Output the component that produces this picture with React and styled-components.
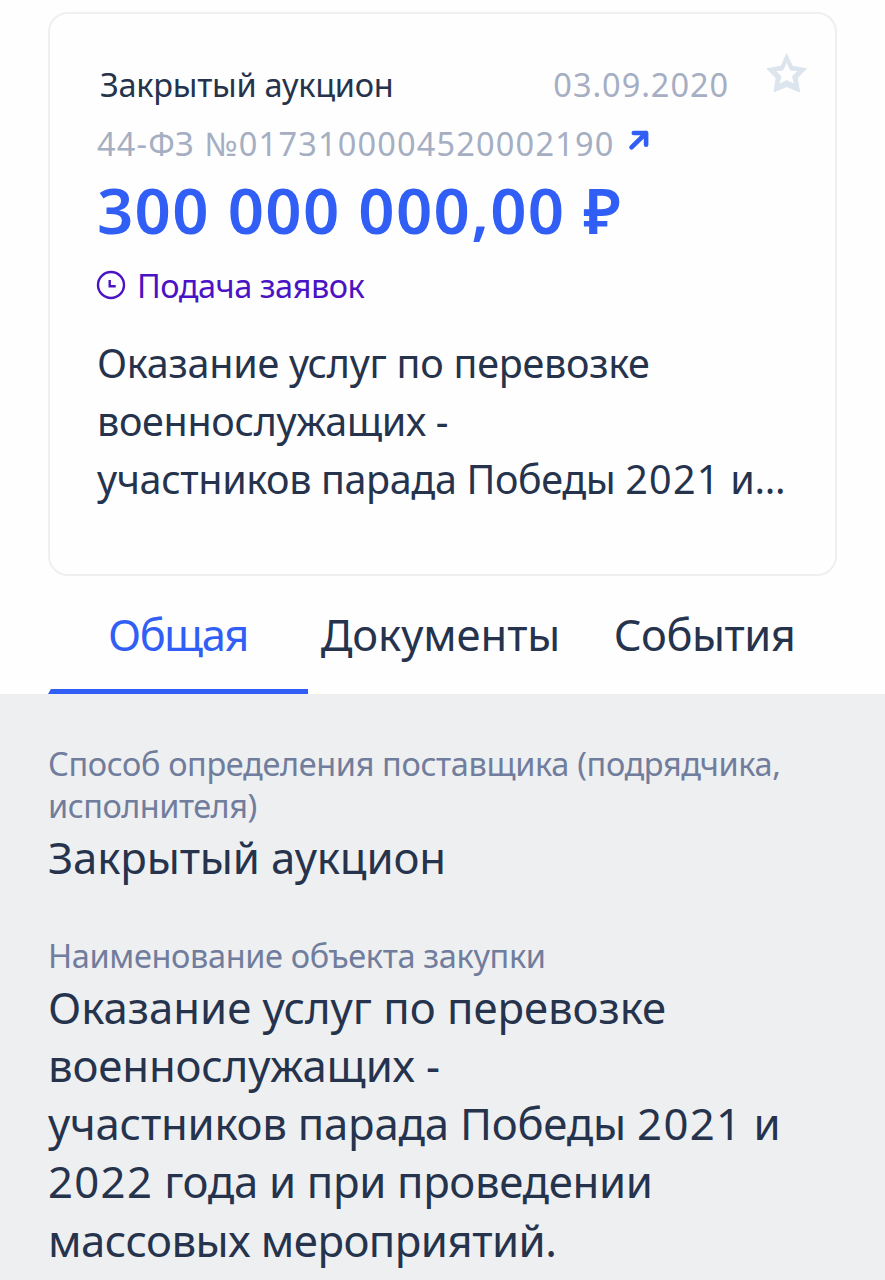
import React from 'react';
import styled, { createGlobalStyle } from 'styled-components';

const Global = createGlobalStyle`
  * { box-sizing: border-box; }
  body { margin: 0; background: #fefefe; font-family: "Noto Sans", sans-serif; color: #26334d; }
`;
const Page = styled.main`width: 885px; height: 1280px; overflow: hidden; display: flex; flex-direction: column;`;
const Card = styled.article`
  margin: 12px 48px 0; width: 789px; height: 564px; flex: none;
  border: 2px solid #eeeff0; border-radius: 20px; padding: 49px 28px 0 48px;
`;
const Line = styled.span`
  display: block; white-space: nowrap; letter-spacing: ${p => p.$track || 0}px;
`;
const Year = styled.span`letter-spacing: 0.03em;`;
const Header = styled.header`
  display: flex; align-items: flex-start; height: 59px; font-size: 32.5px; line-height: 44px;
`;
const Kind = styled.div`margin-left: 2px; flex: 1;`;
const DateText = styled.time`color: #a5aec2;`;
const StarButton = styled.button`
  border: 0; background: none; padding: 0; margin: -12px -1px 0 36px; width: 43px; height: 43px;
  svg { display: block; }
`;
const NumberRow = styled.div`
  display: flex; color: #a5aec2; font-size: 32.5px; line-height: 44px; height: 48px; margin-left: -1px;
  svg { margin: 7px 0 0 14px; }
`;
const Price = styled.div`color: #315ef5; font-size: 63.5px; font-weight: 600; line-height: 80px; height: 94px; margin-left: -1px;`;
const Status = styled.div`
  display: flex; color: #4a14c4; font-size: 32.5px; line-height: 44px; height: 70px;
  svg { margin: 6px 11px 0 -2px; }
`;
const Summary = styled.div`font-size: 39.5px; line-height: 58px; margin-left: -1px;`;
const Tabs = styled.nav`display: flex; height: 118px; margin: 0 48px; flex: none;`;
const Tab = styled.div`
  width: ${p => p.$width}px; display: flex; flex-direction: column; align-items: center; justify-content: space-between;
  padding-top: 29px; font-size: 43.5px; line-height: 58px; color: ${p => (p.$active ? '#315ef5' : '#26334d')};
`;
const Indicator = styled.div`width: 260px; height: 5px; background: #315ef5; clip-path: polygon(3px 0, 100% 0, 100% 100%, 0 100%);`;
const Panel = styled.section`flex: 1; background: #eeeff1; padding: 49px 48px 0;`;
const Field = styled.div`margin-bottom: 49.5px;`;
const Label = styled.div`color: #717d9c; font-size: 32.5px; line-height: 42px; margin-bottom: 0.5px;`;
const Value = styled.div`font-size: 43.7px; line-height: 58.2px;`;

const withYears = text =>
  text.split(/(\b202[12]\b)(?= )/).map((part, i) => (i % 2 ? <Year key={i}>{part}</Year> : part));
const lines = rows => rows.map(([text, track]) => <Line key={text} $track={track}>{withYears(text)}</Line>);

const Star = () => (
  <svg width="43" height="43" viewBox="0 0 43 43" fill="#dce4ee" fillRule="evenodd" stroke="#dce4ee" strokeWidth="1" strokeLinejoin="round">
    <path d="M21.7 2.8L27.3 15.2L41.3 17.8L32.3 27L34.5 40.8L21.7 35.5L9 40.8L11.2 27L2 17.8L16.1 15.2ZM21.7 10.5L17.9 19L10 19.6L15.9 25.2L13.8 33.5L21.7 29.6L29.6 33.5L27.5 25.2L33.5 19.6L25.5 19Z" />
  </svg>
);
const Arrow = () => (
  <svg width="24" height="24" viewBox="0 0 24 24" fill="none" stroke="#315ef5" strokeWidth="4.6" strokeLinecap="round" strokeLinejoin="round">
    <path d="M3.5 18.3L18.1 4M5.8 4h12.3v11.7" />
  </svg>
);
const Clock = () => (
  <svg width="30" height="30" viewBox="0 0 30 30" fill="none" stroke="#4a14c4" strokeWidth="2.4">
    <circle cx="15" cy="15" r="13" /><path d="M13.7 10v6.2h6" />
  </svg>
);

export default function App() {
  return (
    <>
      <Global />
      <Page>
        <Card>
          <Header>
            <Kind>{lines([['Закрытый аукцион', -0.27]])}</Kind>
            <DateText>{lines([['03.09.2020', 0.95]])}</DateText>
            <StarButton aria-label="В избранное"><Star /></StarButton>
          </Header>
          <NumberRow>{lines([['44-ФЗ №0173100004520002190', 1.18]])}<Arrow /></NumberRow>
          <Price>{lines([['300 000 000,00 ₽', 1.3]])}</Price>
          <Status><Clock />{lines([['Подача заявок', -0.5]])}</Status>
          <Summary>{lines([
            ['Оказание услуг по перевозке', -0.26],
            ['военнослужащих -', -0.33],
            ['участников парада Победы 2021 и...', -0.38],
          ])}</Summary>
        </Card>
        <Tabs>
          <Tab $active $width={260}>{lines([['Общая', -1.5]])}<Indicator /></Tab>
          <Tab $width={265}>{lines([['Документы', -0.05]])}</Tab>
          <Tab $width={263}>{lines([['События', -0.5]])}</Tab>
        </Tabs>
        <Panel>
          <Field>
            <Label>{lines([['Способ определения поставщика (подрядчика,', -0.36], ['исполнителя)', -0.5]])}</Label>
            <Value>{lines([['Закрытый аукцион', -0.15]])}</Value>
          </Field>
          <Field>
            <Label>{lines([['Наименование объекта закупки', -0.36]])}</Label>
            <Value>{lines([
              ['Оказание услуг по перевозке', -0.03],
              ['военнослужащих -', -0.15],
              ['участников парада Победы 2021 и', -0.23],
              ['2022 года и при проведении', -0.33],
              ['массовых мероприятий.', -0.52],
            ])}</Value>
          </Field>
        </Panel>
      </Page>
    </>
  );
}
